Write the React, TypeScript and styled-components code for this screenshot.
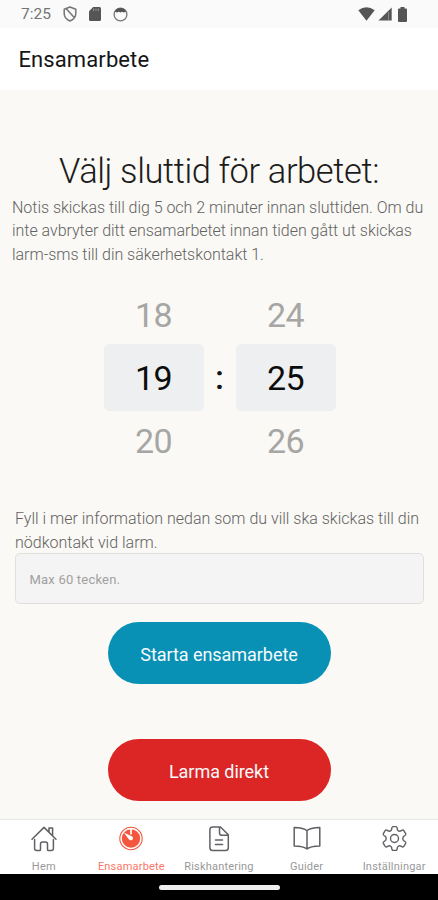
import React from "react";
import styled, { createGlobalStyle } from "styled-components";

const GlobalStyle = createGlobalStyle`
  * { box-sizing: border-box; }
  body { margin: 0; background: #faf9f5; font-family: Roboto, sans-serif; }
`;

const Screen = styled.div`
  width: 438px;
  height: 900px;
  display: flex;
  flex-direction: column;
  overflow: hidden;
  background: #faf9f5;
`;

const StatusBar = styled.div`
  height: 28px;
  flex: none;
  padding: 0 31px 0 21px;
  display: flex;
  align-items: center;
  justify-content: space-between;
  background: #fafafa;
  color: #747474;
  font-size: 15.5px;
`;

const StatusGroup = styled.div<{ $gap: number }>`
  display: flex;
  align-items: center;
  gap: ${(p) => p.$gap}px;
  svg { display: block; }
`;

const Header = styled.header`
  height: 62px;
  flex: none;
  padding: 1px 18.5px 0;
  display: flex;
  align-items: center;
  background: #fff;
  color: #151515;
  font-size: 22px;
  letter-spacing: 0.1px;
`;

const Content = styled.main`
  height: 729px;
  flex: none;
  display: flex;
  flex-direction: column;
  align-items: center;
`;

const Title = styled.h1`
  margin: 60px 0 0;
  height: 46px;
  line-height: 43px;
  font-size: 34.5px;
  font-weight: 300;
  letter-spacing: -0.4px;
  color: #1c1c1c;
  white-space: nowrap;
`;

const Paragraph = styled.p<{ $left: number; $spacing: number }>`
  margin: 0;
  align-self: stretch;
  padding-left: ${(p) => p.$left}px;
  font-size: 16px;
  line-height: 23.4px;
  font-weight: 300;
  letter-spacing: ${(p) => p.$spacing}px;
  color: #626262;
  white-space: nowrap;
`;

const Picker = styled.div`
  margin-top: 14px;
  padding-left: 1px;
  height: 194px;
  display: flex;
  align-items: center;
`;

const Wheel = styled.div`
  width: 100px;
  display: flex;
  flex-direction: column;
`;

const WheelValue = styled.div<{ $selected?: boolean }>`
  height: ${(p) => (p.$selected ? 67 : 59)}px;
  display: flex;
  align-items: center;
  justify-content: center;
  padding-top: 2px;
  border-radius: 5px;
  background: ${(p) => (p.$selected ? "#eeeff0" : "transparent")};
  color: ${(p) => (p.$selected ? "#0c0c0c" : "#a6a6a4")};
  font-size: 34px;
  letter-spacing: -0.5px;
`;

const Separator = styled.div`
  width: 32px;
  text-align: center;
  font-size: 34px;
  font-weight: 500;
  color: #151515;
`;

const NoteField = styled.input`
  width: 409px;
  height: 51px;
  flex: none;
  margin-top: -1px;
  padding: 1px 14px 0;
  border: 1px solid #dfe0de;
  border-radius: 5px;
  background: #f4f4f4;
  font: 400 13px Roboto, sans-serif;
  letter-spacing: 0.2px;
  outline: none;
  &::placeholder { color: #a0a0a0; opacity: 1; }
`;

const Spacer = styled.div<{ $h: number }>`
  height: ${(p) => p.$h}px;
  flex: none;
`;

const PillButton = styled.button<{ $color: string }>`
  width: 223px;
  height: 62px;
  flex: none;
  padding: 2px 0 0;
  border: 0;
  border-radius: 31px;
  background: ${(p) => p.$color};
  color: #f7fafa;
  font: 400 18px Roboto, sans-serif;
  letter-spacing: -0.05px;
`;

const TabBar = styled.nav`
  height: 55px;
  flex: none;
  display: grid;
  grid-template-columns: repeat(5, 87.6px);
  border-top: 1px solid #e6e7e8;
  background: #fff;
  overflow: hidden;
`;

const Tab = styled.div<{ $active?: boolean }>`
  display: flex;
  flex-direction: column;
  align-items: center;
  padding-top: 5px;
  color: ${(p) => (p.$active ? "#f4553d" : "#5f6164")};
  svg { display: block; flex: none; }
`;

const TabLabel = styled.span<{ $active?: boolean }>`
  margin-top: 7px;
  font-size: 11px;
  line-height: 13px;
  letter-spacing: 0.2px;
  white-space: nowrap;
  color: ${(p) => (p.$active ? "#f97767" : "#999")};
`;

const SystemBar = styled.div`
  height: 26px;
  flex: none;
  display: flex;
  justify-content: center;
  padding-top: 11px;
  background: #000;
`;

const HomeIndicator = styled.div`
  width: 121px;
  height: 5px;
  border-radius: 3px;
  background: #eee;
`;

const line = { fill: "none", stroke: "currentColor", strokeWidth: 1.5, strokeLinecap: "round", strokeLinejoin: "round" } as const;

const ShieldIcon = () => (
  <svg width="14" height="16" viewBox="0 0 14 16" {...line}>
    <path d="M7 1 12.8 3.2V7.5C12.8 11 10.4 13.6 7 15 3.6 13.6 1.2 11 1.2 7.5V3.2Z M3.2 2.7 11.3 11.6" />
  </svg>
);
const SdIcon = () => (
  <svg width="12" height="14" viewBox="0 0 12 14">
    <path fill="#555" d="M4.2 0H10.5Q12 0 12 1.5V12.5Q12 14 10.5 14H1.5Q0 14 0 12.5V4.2Z" />
    <path stroke="#999" strokeWidth="1" d="M4.6 1.5V4 M7 1.5V4 M9.4 1.5V4" />
  </svg>
);
const FaceIcon = () => (
  <svg width="15" height="15" viewBox="0 0 15 15">
    <circle cx="7.5" cy="7.5" r="6.4" fill="none" stroke="#777" strokeWidth="1.3" />
    <path fill="#555" d="M1.8 4.6Q3.5 .9 7.5 .9T13.2 4.6L10.8 5.5 9 4.8 7.5 5.6 5.8 4.8 4 5.5Z" />
  </svg>
);
const WifiIcon = () => (
  <svg width="17" height="14" viewBox="0 0 17 14">
    <path fill="#555" d="M.3 3.2Q8.5-2.6 16.7 3.2L8.5 13.7Z" />
  </svg>
);
const SignalIcon = () => (
  <svg width="14" height="14" viewBox="0 0 14 14">
    <path fill="#555" d="M13.7.5V13.5H.5Z" />
    <path stroke="#888" strokeWidth="1" d="M10.5 5V13" />
  </svg>
);
const BatteryIcon = () => (
  <svg width="9" height="15" viewBox="0 0 9 15">
    <path fill="#555" d="M2.5 0H6.5V1.5H8Q9 1.5 9 2.5V14Q9 15 8 15H1Q0 15 0 14V2.5Q0 1.5 1 1.5H2.5Z" />
  </svg>
);

const HomeIcon = () => (
  <svg width="28" height="28" viewBox="0 0 28 28" {...line}>
    <path d="M2 14.2 14 2.4 26 14.2 M19 6.8V3H22.6V10.5 M4.6 14.5V23.5Q4.6 25.5 6.6 25.5H9.4Q10.5 25.5 10.5 24.4V19Q10.5 17 12.5 17H15.5Q17.5 17 17.5 19V24.4Q17.5 25.5 18.6 25.5H21.4Q23.4 25.5 23.4 23.5V14.5" />
  </svg>
);
const TimerIcon = () => (
  <svg width="28" height="28" viewBox="0 0 28 28">
    <circle cx="14" cy="13.5" r="11.2" fill="none" stroke="currentColor" strokeWidth="1.1" />
    <circle cx="14" cy="13.5" r="9.2" fill="currentColor" />
    <path d="M14 4.3V8.7" fill="none" stroke="#fff" strokeWidth="1.7" strokeLinecap="round" />
    <path d="M6.8 7.4 12 14.6Q13.8 16.2 15.6 14.6 16.8 12.8 15.2 11.6Z" fill="#fff" />
  </svg>
);
const DocIcon = () => (
  <svg width="28" height="28" viewBox="0 0 28 28" {...line}>
    <path d="M15.5 2H7.7Q4.9 2 4.9 4.8V22.7Q4.9 25.5 7.7 25.5H20.5Q23.3 25.5 23.3 22.7V9.8Z M14.5 2V7.7Q14.5 10.3 17.1 10.3H23 M10.5 15H17.5 M10.5 19.5H17.5" />
  </svg>
);
const BookIcon = () => (
  <svg width="28" height="28" viewBox="0 0 28 28" {...line}>
    <path d="M14 5.7Q11 2.7 1.2 2.4V21Q11 21.3 14 24 17 21.3 26.8 21V2.4Q17 2.7 14 5.7ZV24" />
  </svg>
);
const GearIcon = () => (
  <svg width="28" height="28" viewBox="0 0 28 28" {...line} strokeWidth={1.4}>
    <path d="M11.6 4.6Q11.8 1.6 13 1.6H16Q17.2 1.6 17.4 4.6Q17.6 5.6 19 6.2Q20 6.4 22.3 5.1Q23.3 4.7 24 5.8L25.8 8.9Q26.2 10 24 11.2Q22.8 12 22.8 13.5T24 15.8Q26.2 17 25.8 18.1L24 21.2Q23.3 22.3 22.3 21.9Q20 20.6 19 20.8Q17.6 21.4 17.4 22.4Q17.2 25.4 16 25.4H13Q11.8 25.4 11.6 22.4Q11.4 21.4 10 20.8Q9 20.6 6.7 21.9Q5.7 22.3 5 21.2L3.2 18.1Q2.8 17 5 15.8Q6.2 15 6.2 13.5T5 11.2Q2.8 10 3.2 8.9L5 5.8Q5.7 4.7 6.7 5.1Q9 6.4 10 6.2Q11.4 5.6 11.6 4.6Z" />
    <circle cx="14.5" cy="13.5" r="4" />
  </svg>
);

const tabs = [
  { label: "Hem", icon: <HomeIcon /> },
  { label: "Ensamarbete", icon: <TimerIcon />, active: true },
  { label: "Riskhantering", icon: <DocIcon /> },
  { label: "Guider", icon: <BookIcon /> },
  { label: "Inställningar", icon: <GearIcon /> },
];

const TimeWheel = ({ values }: { values: string[] }) => (
  <Wheel>
    {values.map((v, i) => (
      <WheelValue key={v} $selected={i === 1}>{v}</WheelValue>
    ))}
  </Wheel>
);

export default function App() {
  return (
    <Screen>
      <GlobalStyle />
      <StatusBar>
        <StatusGroup $gap={12}>
          <span>7:25</span>
          <ShieldIcon />
          <SdIcon />
          <FaceIcon />
        </StatusGroup>
        <StatusGroup $gap={3}>
          <WifiIcon />
          <SignalIcon />
          <Spacer $h={1} />
          <BatteryIcon />
        </StatusGroup>
      </StatusBar>
      <Header>Ensamarbete</Header>
      <Content>
        <Title>Välj sluttid för arbetet:</Title>
        <Paragraph $left={12} $spacing={-0.03}>
          Notis skickas till dig 5 och 2 minuter innan sluttiden. Om du<br />
          inte avbryter ditt ensamarbetet innan tiden gått ut skickas<br />
          larm-sms till din säkerhetskontakt 1.
        </Paragraph>
        <Picker>
          <TimeWheel values={["18", "19", "20"]} />
          <Separator>:</Separator>
          <TimeWheel values={["24", "25", "26"]} />
        </Picker>
        <Spacer $h={33} />
        <Paragraph $left={15} $spacing={0}>
          Fyll i mer information nedan som du vill ska skickas till din<br />
          nödkontakt vid larm.
        </Paragraph>
        <NoteField placeholder="Max 60 tecken." />
        <Spacer $h={18} />
        <PillButton $color="#0891b5">Starta ensamarbete</PillButton>
        <Spacer $h={55} />
        <PillButton $color="#dc2626">Larma direkt</PillButton>
      </Content>
      <TabBar>
        {tabs.map((t) => (
          <Tab key={t.label} $active={t.active}>
            {t.icon}
            <TabLabel $active={t.active}>{t.label}</TabLabel>
          </Tab>
        ))}
      </TabBar>
      <SystemBar>
        <HomeIndicator />
      </SystemBar>
    </Screen>
  );
}
